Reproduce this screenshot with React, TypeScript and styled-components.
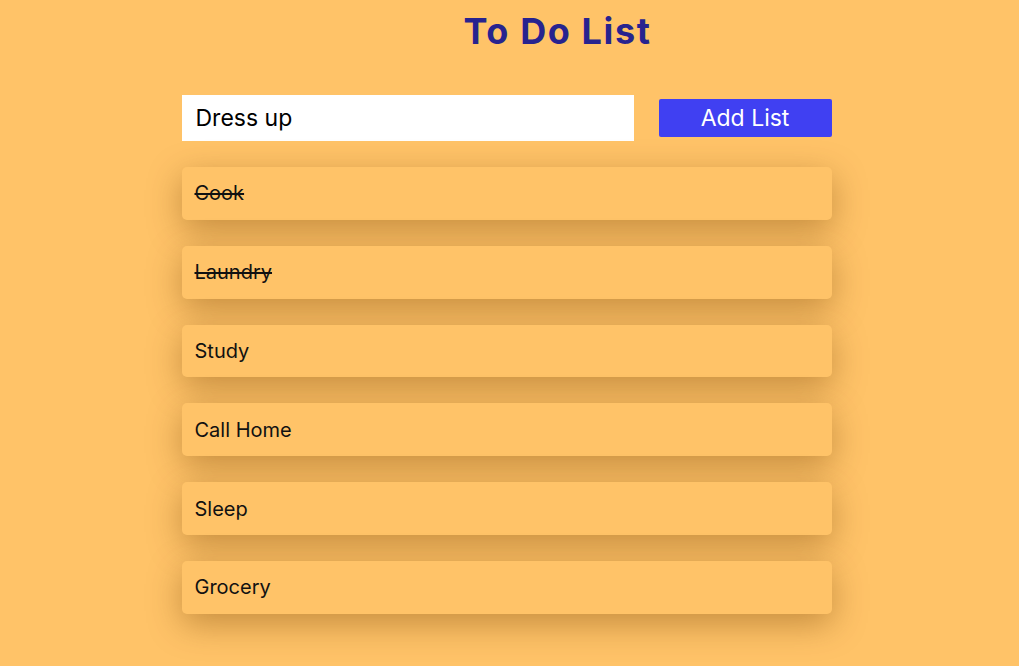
import React, { useState } from 'react'
import styled, { createGlobalStyle } from 'styled-components'

const GlobalStyle = createGlobalStyle`
  html, body {
    margin: 0;
    padding: 0;
    background: #ffc368;
    font-family: 'Inter', 'Noto Sans', sans-serif;
  }
`

const Page = styled.div`
  min-height: 666px;
  display: flex;
  flex-direction: column;
  align-items: center;
`
const Title = styled.h1`
  margin: 9px 0 0 96px;
  font-size: 36px;
  font-weight: 700;
  color: #27238f;
  letter-spacing: 1.6px;
  line-height: 44px;
`
const Main = styled.div`
  width: 650px;
  margin-top: 42px;
  margin-left: -6px;
`
const Form = styled.form`
  display: flex;
  align-items: center;
  justify-content: space-between;
`
const Input = styled.input`
  width: 452px;
  height: 46px;
  box-sizing: border-box;
  border: none;
  outline: none;
  padding: 0 14px;
  font-family: inherit;
  font-size: 23px;
  color: #000;
  background: #fff;
`
const AddButton = styled.button`
  width: 173px;
  height: 38px;
  border: none;
  border-radius: 2px;
  background: #4040f2;
  color: #fff;
  font-family: inherit;
  font-size: 23px;
  cursor: pointer;
`
const List = styled.ul`
  list-style: none;
  margin: 26px 0 0;
  padding: 0;
  display: flex;
  flex-direction: column;
  gap: 26px;
`
const Item = styled.li<{ $done: boolean }>`
  height: 52.8px;
  display: flex;
  align-items: center;
  padding: 0 13px;
  border-radius: 5px;
  background: #ffc368;
  box-shadow: 0 10px 34px rgba(110, 60, 0, 0.4);
  font-size: 20px;
  color: #111;
  text-decoration: ${(p) => (p.$done ? 'line-through' : 'none')};
  cursor: pointer;
`

const initial = [
  { text: 'Cook', done: true },
  { text: 'Laundry', done: true },
  { text: 'Study', done: false },
  { text: 'Call Home', done: false },
  { text: 'Sleep', done: false },
  { text: 'Grocery', done: false },
]

const App: React.FC = () => {
  const [items, setItems] = useState(initial)
  const [value, setValue] = useState('Dress up')

  const add = (e: React.FormEvent) => {
    e.preventDefault()
    if (!value.trim()) return
    setItems((prev) => [...prev, { text: value, done: false }])
    setValue('')
  }
  const toggle = (i: number) => {
    setItems((prev) => prev.map((it, j) => (j === i ? { ...it, done: !it.done } : it)))
  }

  return (
    <>
      <GlobalStyle />
      <Page>
        <Title>To Do List</Title>
        <Main>
          <Form onSubmit={add}>
            <Input value={value} onChange={(e) => setValue(e.target.value)} />
            <AddButton type="submit">Add List</AddButton>
          </Form>
          <List>
            {items.map((it, i) => (
              <Item key={i} $done={it.done} onClick={() => toggle(i)}>
                {it.text}
              </Item>
            ))}
          </List>
        </Main>
      </Page>
    </>
  )
}

export default App
